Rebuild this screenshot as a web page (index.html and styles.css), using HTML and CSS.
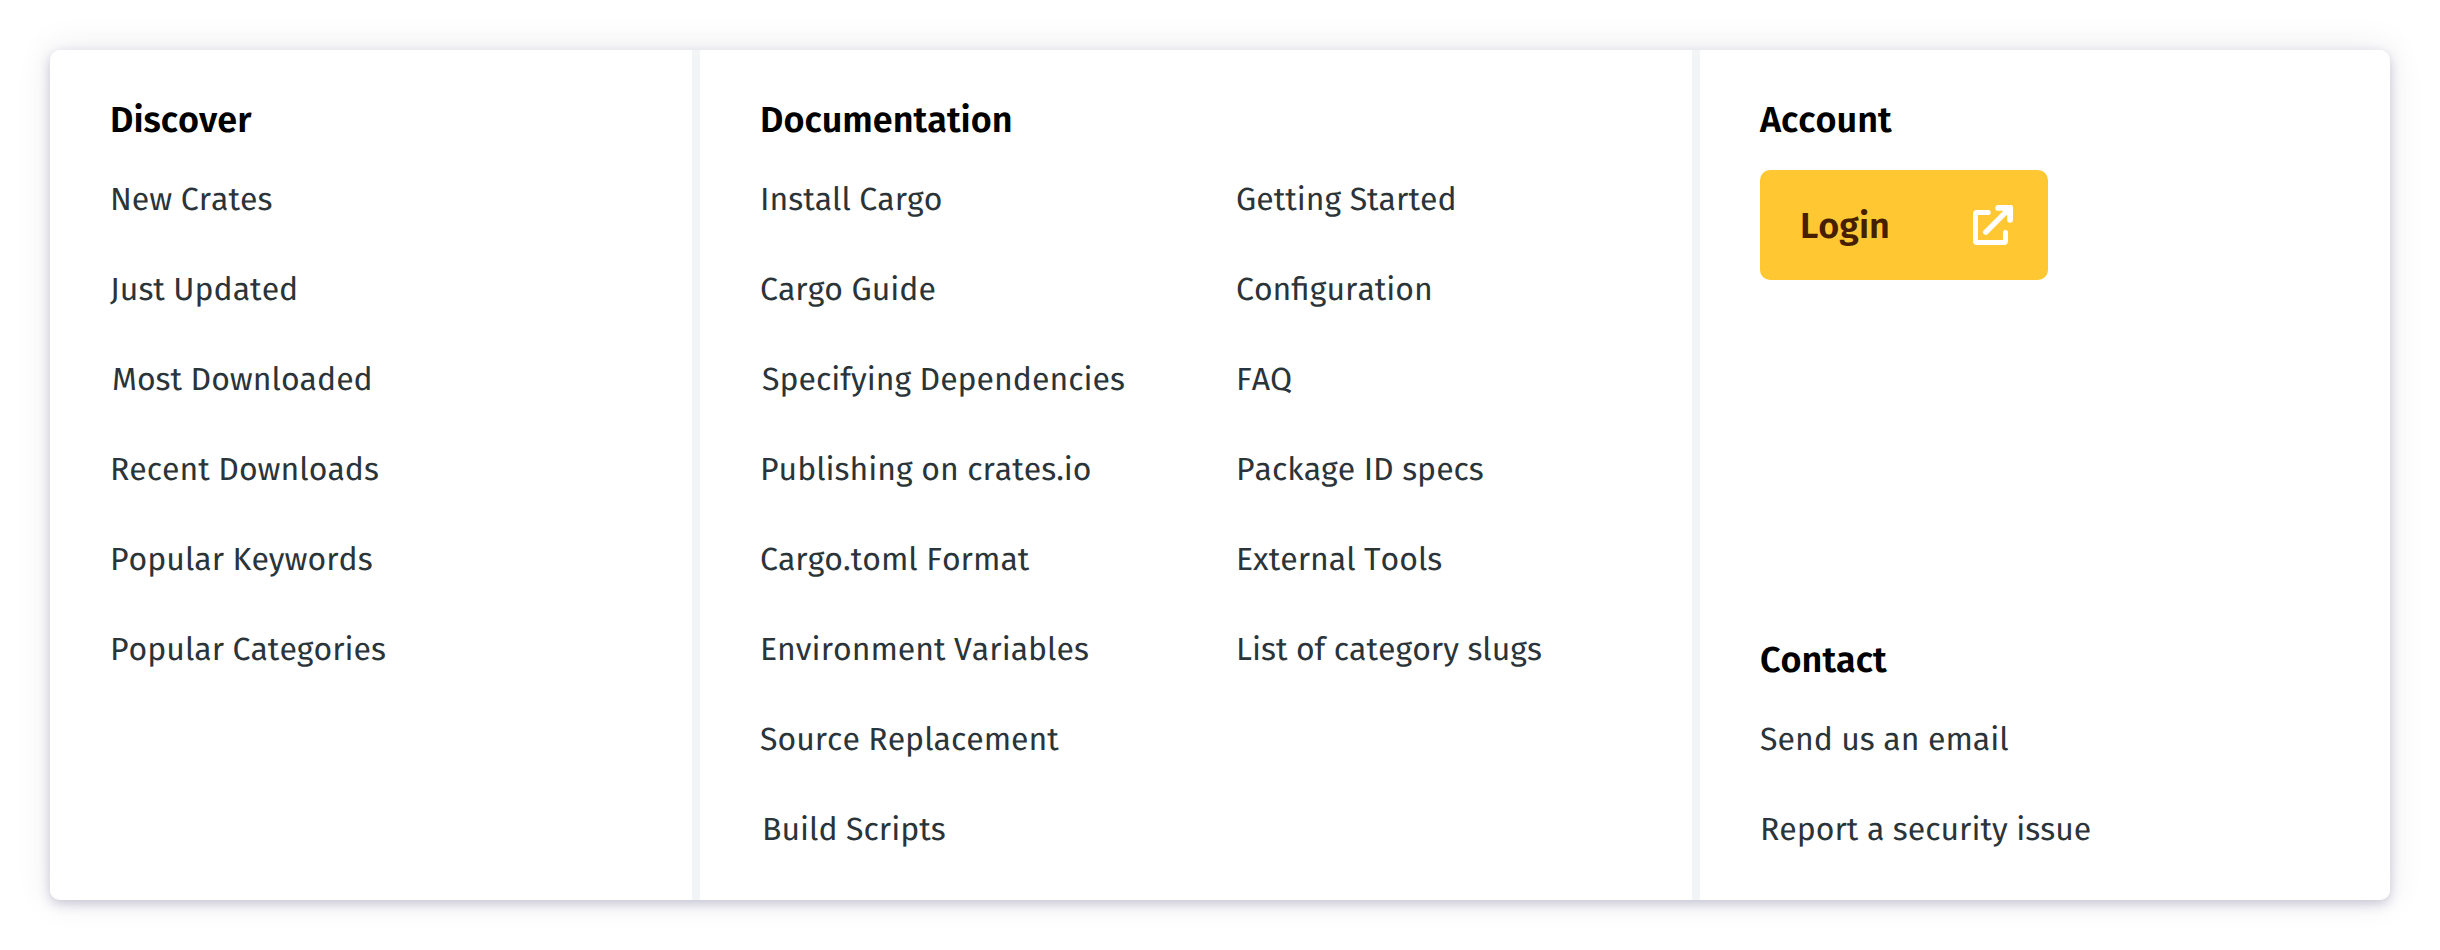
FILE: index.html
```html
<!DOCTYPE html>
<html lang="en">
<head>
<meta charset="utf-8">
<title>Crates menu</title>
<link rel="stylesheet" href="styles.css">
</head>
<body>
<nav class="menu">
  <section class="panel discover">
    <h2 class="heading">Discover</h2>
    <ul class="links">
      <li>New Crates</li>
      <li>Just Updated</li>
      <li class="nudge">Most Downloaded</li>
      <li>Recent Downloads</li>
      <li>Popular Keywords</li>
      <li>Popular Categories</li>
    </ul>
  </section>
  <section class="panel docs">
    <h2 class="heading">Documentation</h2>
    <div class="columns">
      <ul class="links">
        <li>Install Cargo</li>
        <li>Cargo Guide</li>
        <li class="nudge">Specifying Dependencies</li>
        <li>Publishing on crates.io</li>
        <li>Cargo.toml Format</li>
        <li>Environment Variables</li>
        <li>Source Replacement</li>
        <li class="nudge">Build Scripts</li>
      </ul>
      <ul class="links">
        <li>Getting Started</li>
        <li>Configuration</li>
        <li>FAQ</li>
        <li>Package ID specs</li>
        <li>External Tools</li>
        <li>List of category slugs</li>
      </ul>
    </div>
  </section>
  <section class="panel side">
    <div>
      <h2 class="heading">Account</h2>
      <button class="login">
        <span class="login-label">Login</span>
        <svg class="icon" viewBox="0 0 40 40" fill="#fff">
          <path d="M4 5H15.3a2.5 2.5 0 0 1 0 5H5V35H30V27.5a2.5 2.5 0 0 1 5 0V36a4 4 0 0 1-4 4H4a4 4 0 0 1-4-4V9a4 4 0 0 1 4-4Z"/>
          <path d="M25.2 0H38a2 2 0 0 1 2 2V14.8a2.9 2.9 0 0 1-5.8 0V9.6L14.8 29.1a2.7 2.7 0 0 1-3.9-3.9L30.4 5.8H25.2a2.9 2.9 0 0 1 0-5.8Z"/>
        </svg>
      </button>
    </div>
    <div>
      <h2 class="heading">Contact</h2>
      <ul class="links">
        <li>Send us an email</li>
        <li>Report a security issue</li>
      </ul>
    </div>
  </section>
</nav>
</body>
</html>
```

FILE: styles.css
```css
* { box-sizing: border-box; }
body {
  margin: 0;
  padding: 50px;
  background: #fff;
  font-family: "Fira Sans", "Open Sans", sans-serif;
  text-rendering: geometricPrecision;
  font-kerning: none;
}
.menu {
  display: grid;
  grid-template-columns: 642px 992px 1fr;
  gap: 8px;
  height: 850px;
  border-radius: 10px;
  background: #f3f4f6;
  box-shadow: 0 4px 12px rgba(47, 43, 100, 0.23), 0 -1px 34px rgba(47, 43, 92, 0.1);
  overflow: hidden;
}
.panel { padding: 50px 60px 25px; background: #fff; }
.heading {
  margin: 0;
  font-size: 36px;
  line-height: 40px;
  font-weight: 600;
  color: #000;
}
.links {
  margin: 15px 0 0;
  padding: 0;
  list-style: none;
  font-size: 32px;
  line-height: 90px;
  color: #2a3439;
  white-space: nowrap;
}
.nudge { padding-left: 2px; }
.columns { display: grid; grid-template-columns: 476px 1fr; }
.side {
  display: flex;
  flex-direction: column;
  justify-content: space-between;
}
.login {
  display: flex;
  align-items: center;
  justify-content: space-between;
  width: 288px;
  height: 110px;
  margin-top: 30px;
  padding: 0 35px 0 40px;
  border: 0;
  border-radius: 10px;
  background: #ffc832;
  color: #461e00;
  font: inherit;
  font-size: 36px;
  font-weight: 600;
  font-kerning: none;
}
.login-label { padding-top: 2px; }
.icon { width: 40px; height: 40px; }
```
